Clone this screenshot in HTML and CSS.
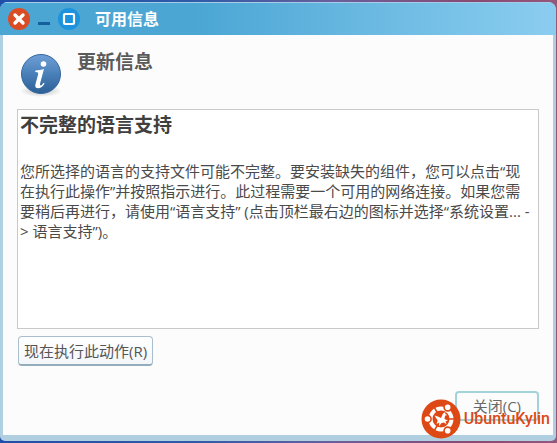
FILE: index.html
```html
<!DOCTYPE html>
<html lang="zh-CN">
<head>
    <meta charset="UTF-8">
    <meta name="viewport" content="width=device-width, initial-scale=1.0">
    <title>可用信息</title>
    <link rel="stylesheet" href="styles.css">
</head>
<body>
    <div class="window">
        <header class="titlebar">
            <button class="win-btn" type="button" aria-label="关闭窗口">
                <svg width="22" height="22" viewBox="0 0 22 22">
                    <circle cx="11" cy="11" r="11" fill="#dc4c24"/>
                    <path d="M7 7l8 8M15 7l-8 8" stroke="#fff" stroke-width="3.4" stroke-linecap="round"/>
                </svg>
            </button>
            <button class="win-btn" type="button" aria-label="最小化">
                <svg width="12" height="22" viewBox="0 0 12 22">
                    <path d="M0 15.5h12" stroke="#155f9c" stroke-width="3"/>
                </svg>
            </button>
            <button class="win-btn" type="button" aria-label="最大化">
                <svg width="22" height="22" viewBox="0 0 22 22">
                    <circle cx="11" cy="11" r="11" fill="#1c93dc"/>
                    <rect x="6" y="6" width="10" height="10" rx="1" fill="none" stroke="#fff" stroke-width="2.2"/>
                </svg>
            </button>
            <span class="window-title">可用信息</span>
        </header>
        <main class="content">
            <div class="summary">
                <svg class="info-icon" width="44" height="46" viewBox="0 0 44 46">
                    <defs>
                        <linearGradient id="ball" x1="0" y1="0" x2="0" y2="1">
                            <stop offset="0" stop-color="#6f9fd6"/>
                            <stop offset="0.5" stop-color="#4a80b8"/>
                            <stop offset="1" stop-color="#2c5f96"/>
                        </linearGradient>
                        <radialGradient id="shade">
                            <stop offset="0.4" stop-color="#000" stop-opacity="0.15"/>
                            <stop offset="1" stop-color="#000" stop-opacity="0"/>
                        </radialGradient>
                    </defs>
                    <ellipse cx="22" cy="39" rx="21" ry="6" fill="url(#shade)"/>
                    <circle cx="22" cy="22" r="19.5" fill="url(#ball)" stroke="#34689f"/>
                    <circle cx="24.5" cy="12" r="2.8" fill="#fff"/>
                    <path d="M16.500 18.500q4.500-.5 8.500-1.500l-3.800 14q-.6 2.500.4 2.500 1.200 0 3-2.800l1 .7q-2.800 4.800-6.300 4.800-4 0-2.800-4.300l2.600-9.500q.5-1.900-.7-2.100l-2.200-.3z" fill="#fff"/>
                </svg>
                <h1>更新信息</h1>
            </div>
            <section class="message">
                <h2>不完整的语言支持</h2>
                <p>您所选择的语言的支持文件可能不完整。要安装缺失的组件，您可以点击“现在执行此操作”并按照指示进行。此过程需要一个可用的网络连接。如果您需要稍后再进行，请使用“语言支持” (点击顶栏最右边的图标并选择“系统设置... -&gt; 语言支持”)。</p>
            </section>
            <div class="actions">
                <button class="btn" type="button">现在执行此动作(R)</button>
            </div>
            <div class="dialog-buttons">
                <button class="btn btn-close" type="button">关闭(C)</button>
            </div>
        </main>
    </div>
    <div class="watermark">
        <svg width="40" height="40" viewBox="0 0 40 40">
            <circle cx="20" cy="20" r="19.5" fill="#dd4814"/>
            <circle cx="20" cy="20" r="10.5" fill="none" stroke="#fff" stroke-width="4"/>
            <path d="M20 20L36 20M20 20L12 6.1M20 20L12 33.9" stroke="#dd4814" stroke-width="1.6"/>
            <g fill="#fff" stroke="#dd4814" stroke-width="1.6">
                <circle cx="6.5" cy="20" r="3.6"/>
                <circle cx="26.7" cy="8.3" r="3.6"/>
                <circle cx="26.7" cy="31.7" r="3.6"/>
            </g>
            <circle cx="20" cy="20" r="8" fill="#dd4814"/>
            <path d="M13.5 16.5l4 1.2 2.5 1.3 2-4.5 2.5-1.5-.3 2 2 1-2.2.8-.5 3.200 3.500 1.500-2.500.8 1 3-2.500-1.800-2.500.5-2.500 3.200.3-3.700-2.800 1.500 1.200-3.500z" fill="#fff"/>
        </svg>
        <span>UbuntuKylin</span>
    </div>
</body>
</html>
```
FILE: styles.css
```css
* {
    box-sizing: border-box;
}
body {
    margin: 0;
    min-height: 100vh;
    padding: 2px 1px 2px 0;
    display: flex;
    position: relative;
    font-family: "Open Sans", "Noto Sans CJK SC", sans-serif;
    font-size: 15px;
    line-height: 20px;
    color: #4a4a4a;
    background: linear-gradient(90deg, #1f4fa8 0%, #2f5ca8 35%, #6a5f9c 60%, #8a4a72 85%, #94587c 100%);
}
h1, h2, p {
    margin: 0;
}
button {
    font: inherit;
    color: inherit;
}
.window {
    flex: 1;
    display: flex;
    flex-direction: column;
    border-radius: 8px 8px 5px 5px;
    background: #b0cfe1;
    overflow: hidden;
}
.titlebar {
    display: flex;
    align-items: center;
    gap: 8px;
    height: 33px;
    padding: 0 8px;
    border-top: 1px solid #a5cdea;
    background: linear-gradient(90deg, #4ba6d4 0%, #4ba6d4 35%, #8bcdf0 100%);
}
.win-btn {
    display: flex;
    padding: 0;
    border: 0;
    background: none;
}
.window-title {
    margin-left: 7px;
    font-size: 16px;
    font-weight: bold;
    color: #fff;
}
.content {
    flex: 1;
    display: flex;
    flex-direction: column;
    margin: 0 3px 6px;
    padding: 14px;
    background: #fcfcfc;
}
.summary {
    display: flex;
    gap: 14px;
    height: 60px;
    padding: 3px 2px;
}
.info-icon {
    flex: none;
}
h1, h2 {
    font-size: 19px;
    line-height: 20px;
    font-weight: bold;
}
h1 {
    color: #5a5a5a;
}
.message {
    flex: 1;
    padding: 5px 6px 5px 2px;
    border: 1px solid #c9c9c9;
    background: #fff;
}
.message h2 {
    margin-bottom: 26px;
    color: #3f3f3f;
}
.actions {
    display: flex;
    margin: 7px 1px 25px;
}
.dialog-buttons {
    display: flex;
    justify-content: flex-end;
}
.btn {
    height: 30px;
    padding: 0 5px;
    border: 1px solid #a9bfcf;
    border-bottom: 2px solid #93adbd;
    border-radius: 4px;
    background: linear-gradient(#fff, #f3f6f9);
    color: #555;
}
.btn-close {
    padding: 0 16px;
    border: 2px solid #a3d3da;
    background: #fcfcfc;
    color: #6a6a6a;
}
/* brand mark sits over the corner of the dialog */
.watermark {
    position: absolute;
    right: 7px;
    bottom: 4px;
    display: flex;
    align-items: center;
    gap: 3px;
    font-family: Roboto, sans-serif;
    font-size: 16px;
    font-weight: 500;
    color: #dd4814;
}
```
